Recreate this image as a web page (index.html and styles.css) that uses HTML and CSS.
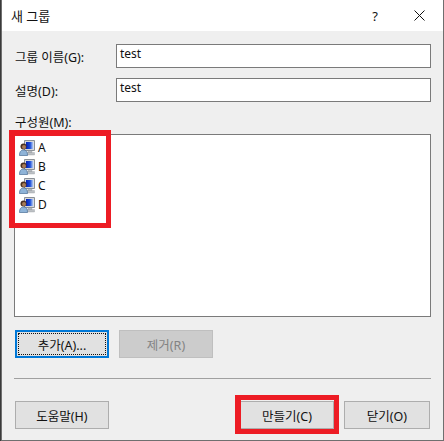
FILE: index.html
```html
<!DOCTYPE html>
<html lang="ko">
<head>
    <meta charset="UTF-8">
    <title>새 그룹</title>
    <link rel="stylesheet" href="styles.css">
</head>
<body>
    <svg class="defs" width="0" height="0">
        <defs>
            <linearGradient id="screen-fill" x1="0" x2="1" y1="0" y2="0">
                <stop offset="0" stop-color="#0420b8"/>
                <stop offset=".55" stop-color="#1c4fd8"/>
                <stop offset="1" stop-color="#cfe0f8"/>
            </linearGradient>
        </defs>
        <symbol id="user-pc" viewBox="0 0 16 16">
            <path d="M5.500.5h10v10h-10z" fill="#d6d8da" stroke="#8b9096"/>
            <path d="M7 2h7.500v7H7z" fill="url(#screen-fill)"/>
            <path d="M9 11h4v1.500H9zM7.500 12.500h8V15h-8z" fill="#bcc0c4" stroke="#9a9ea3" stroke-width=".4"/>
            <circle cx="4.500" cy="6.500" r="3" fill="#4a3020"/>
            <circle cx="5" cy="7" r="2" fill="#a87c58"/>
            <path d="M.5 15.500c0-4 1.500-5.500 4-5.500s4 1.500 4 5.500z" fill="#8fb4d8" stroke="#4a6f96" stroke-width=".7"/>
        </symbol>
    </svg>
    <div class="dialog">
        <div class="titlebar">
            <span class="title">새 그룹</span>
            <span class="help-btn">?</span>
            <svg class="close-btn" width="11" height="11" viewBox="0 0 11 11">
                <path d="M.5.5l10 10M10.500.5l-10 10" stroke="#111" fill="none"/>
            </svg>
        </div>
        <div class="content">
            <div class="field">
                <label>그룹 이름(G):</label>
                <div class="textbox">test</div>
            </div>
            <div class="field">
                <label>설명(D):</label>
                <div class="textbox">test</div>
            </div>
            <div class="members-label">구성원(M):</div>
            <ul class="members">
                <li><svg class="member-icon" width="16" height="16"><use href="#user-pc"/></svg>A</li>
                <li><svg class="member-icon" width="16" height="16"><use href="#user-pc"/></svg>B</li>
                <li><svg class="member-icon" width="16" height="16"><use href="#user-pc"/></svg>C</li>
                <li><svg class="member-icon" width="16" height="16"><use href="#user-pc"/></svg>D</li>
            </ul>
            <div class="member-actions">
                <button class="btn btn-focus"><span class="focus-ring">추가(A)...</span></button>
                <button class="btn btn-disabled">제거(R)</button>
            </div>
            <div class="separator"></div>
            <div class="footer">
                <button class="btn">도움말(H)</button>
                <div class="footer-right">
                    <button class="btn">만들기(C)</button>
                    <button class="btn btn-close">닫기(O)</button>
                </div>
            </div>
        </div>
        <div class="mark mark-members"></div>
        <div class="mark mark-create"></div>
    </div>
</body>
</html>
```

FILE: styles.css
```css
body {
    margin: 0;
    width: 444px;
    height: 441px;
    overflow: hidden;
    background: #3a3a3a;
    font-family: "Noto Sans", "Noto Sans CJK KR", sans-serif;
    font-size: 12.5px;
    color: #111;
}
.defs {
    position: absolute;
}
.dialog {
    position: relative;
    box-sizing: border-box;
    width: 443px;
    height: 441px;
    margin-left: 1px;
    border: 1px solid #6f6f6f;
    border-top: none;
    background: #efefef;
}
.titlebar {
    display: flex;
    align-items: center;
    height: 31px;
    padding: 0 18px 0 9px;
    background: #fff;
}
.title {
    flex: 1;
    font-size: 13px;
}
.help-btn {
    margin-right: 36px;
    font-size: 13px;
}
.content {
    padding: 13px 12px 0;
}
.field {
    display: flex;
    align-items: center;
    height: 24px;
    margin-bottom: 10px;
}
.field label {
    width: 101px;
    padding-left: 1px;
    box-sizing: content-box;
}
.textbox {
    box-sizing: border-box;
    flex: 1;
    height: 24px;
    padding: 0 3px;
    border: 1px solid #7a7a7a;
    background: #fff;
    font-size: 12px;
    line-height: 18px;
}
.members-label {
    height: 17px;
    padding: 2px 0 0 1px;
    line-height: 17px;
}
.members {
    box-sizing: border-box;
    height: 183px;
    margin: 3px 0 13px;
    padding: 3px 4px;
    border: 1px solid #7a7a7a;
    background: #fff;
    list-style: none;
}
.members li {
    display: flex;
    align-items: center;
    height: 19px;
    font-size: 12px;
}
.member-icon {
    margin-right: 3px;
}
.member-actions {
    display: flex;
    gap: 10px;
    padding-left: 1px;
}
.btn {
    box-sizing: border-box;
    width: 94px;
    height: 28px;
    padding: 0;
    border: 1px solid #adadad;
    border-radius: 0;
    background: #e1e1e1;
    color: #111;
    font: inherit;
}
.btn-focus {
    padding: 1px;
    border: 2px solid #0078d7;
}
.focus-ring {
    display: flex;
    align-items: center;
    justify-content: center;
    height: 100%;
    border: 1px dotted #111;
    box-sizing: border-box;
}
.btn-disabled {
    border-color: #bfbfbf;
    background: #cccccc;
    color: #838383;
}
.separator {
    height: 1px;
    margin: 20px 0 22px;
    background: #a0a0a0;
}
.footer {
    display: flex;
    justify-content: space-between;
    padding: 0 1px;
}
.footer-right {
    display: flex;
    gap: 10px;
}
.btn-close {
    width: 86px;
}
.mark {
    position: absolute;
    box-sizing: border-box;
    border-style: solid;
    border-color: #ed1c24;
}
.mark-members {
    left: 7px;
    top: 130px;
    width: 102px;
    height: 98px;
    border-width: 6px 5px 5px 6px;
}
.mark-create {
    left: 233px;
    top: 395px;
    width: 104px;
    height: 39px;
    border-width: 5px 5px 5px 6px;
}
```
